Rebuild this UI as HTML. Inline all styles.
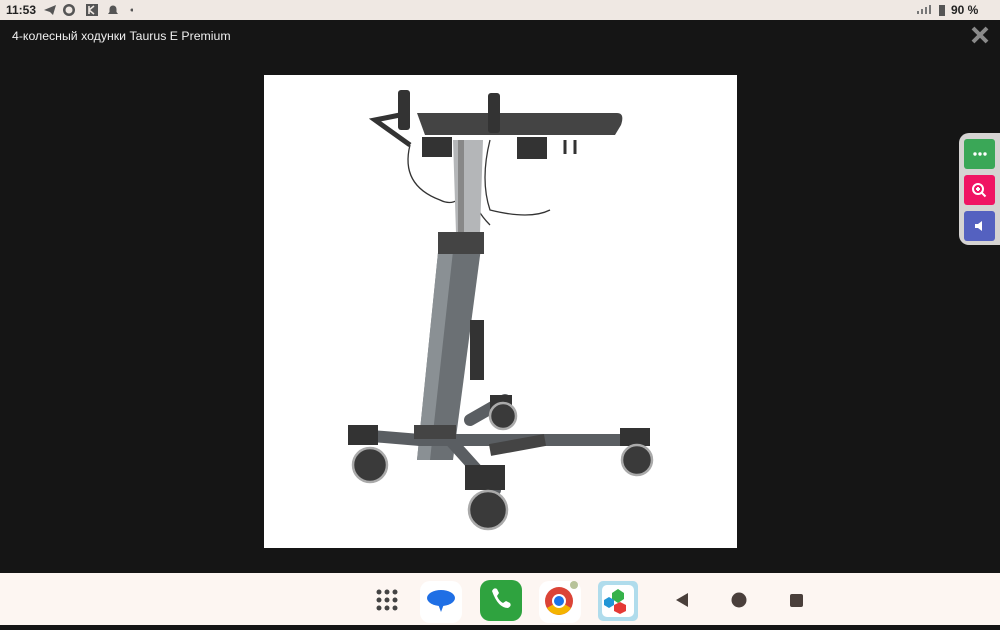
<!DOCTYPE html>
<html><head><meta charset="utf-8"><style>
body{margin:0;width:1000px;height:625px;overflow:hidden;background:#151515;font-family:"Liberation Sans",sans-serif;position:relative}
.sb{position:absolute;left:0;top:0;width:1000px;height:20px;background:#efe8e3;font-size:12px;font-weight:bold;color:#222}
.nav{position:absolute;left:0;top:573px;width:1000px;height:52px;background:#fdf6f2}
.title{position:absolute;left:12px;top:29px;color:#f0f0f0;font-size:12.3px}
.img{position:absolute;left:264px;top:75px;width:473px;height:473px;background:#fff}
.panel{position:absolute;left:959px;top:133px;width:45px;height:112px;background:#d5d3d2;border-radius:10px 0 0 10px}
.btn{position:absolute;left:5px;width:31px;height:30px;border-radius:3px}
</style></head><body>
<div class="sb">
<span style="position:absolute;left:6px;top:3px">11:53</span>
<svg style="position:absolute;left:43px;top:3px" width="90" height="14"><path d="M1 7L13 2 10 12 7 9z" fill="#555"/><circle cx="26" cy="7" r="6" fill="#555"/><circle cx="26" cy="7" r="3.5" fill="#efe8e3"/><rect x="43" y="1" width="12" height="12" fill="#555"/><path d="M46 3v8M46 7l5-4M46 7l5 4" stroke="#efe8e3" stroke-width="1.6"/><path d="M65 11h10l-1.5-2V6a3.5 3.5 0 0 0-7 0v3z" fill="#555"/><circle cx="89" cy="7" r="1.5" fill="#555"/></svg>
<svg style="position:absolute;left:915px;top:4px" width="30" height="12"><path d="M2 10h2V7H2zM6 10h2V5H6zM10 10h2V3h-2zM14 10h2V1h-2z" fill="#777"/><rect x="24" y="1" width="6" height="11" fill="#555"/></svg>
<span style="position:absolute;left:951px;top:3px">90 %</span>
</div>
<div class="title">4-колесный ходунки Taurus E Premium</div>
<svg style="position:absolute;left:971px;top:26px" width="18" height="18"><path d="M2 2L16 16M16 2L2 16" stroke="#8a8a8a" stroke-width="4"/></svg>
<div class="img">
<svg width="473" height="473" viewBox="264 75 473 473">
<g fill="none" stroke="#333" stroke-width="1.3"><path d="M410 145q-10 40 30 55 20 10 30 -20"/><path d="M490 140q-10 40 0 70q40 10 60 0"/><path d="M470 145q-10 50 20 80"/></g>
<path d="M453 140h30l-3 93h-24z" fill="#b4b6b8"/><path d="M458 140h6v93h-6z" fill="#888"/>
<path d="M440 233h43l-30 227h-36z" fill="#6b7074"/><path d="M440 233h15l-25 227h-13z" fill="#8a9094"/>
<rect x="438" y="232" width="46" height="22" fill="#444"/>
<rect x="470" y="320" width="14" height="60" fill="#333"/>
<g stroke="#5a5e62" stroke-width="12" stroke-linecap="round"><path d="M420 440L635 440"/><path d="M420 440L360 435"/><path d="M450 440L495 490"/><path d="M470 420L505 400"/></g>
<path d="M490 450L545 440" stroke="#444" stroke-width="12"/>
<rect x="414" y="425" width="42" height="14" fill="#444"/>
<path d="M417 113h200q8 0 4 12l-6 10h-190z" fill="#444"/>
<path d="M400 115l-25 5 35 25" fill="none" stroke="#333" stroke-width="5"/>
<rect x="398" y="90" width="12" height="40" rx="3" fill="#333"/><rect x="488" y="93" width="12" height="40" rx="3" fill="#333"/>
<rect x="422" y="137" width="30" height="20" fill="#333"/><rect x="517" y="137" width="30" height="22" fill="#333"/>
<path d="M565 140v14M575 140v14" stroke="#333" stroke-width="3"/>
<g fill="#333"><rect x="348" y="425" width="30" height="20"/><rect x="620" y="428" width="30" height="18"/><rect x="465" y="465" width="40" height="25"/><rect x="490" y="395" width="22" height="14"/></g>
<g fill="#3a3a3a" stroke="#aaa" stroke-width="2.5"><circle cx="370" cy="465" r="17"/><circle cx="488" cy="510" r="19"/><circle cx="637" cy="460" r="15"/><circle cx="503" cy="416" r="13"/></g>
</svg></div>
<div class="panel">
<div class="btn" style="top:6px;background:#3aa757"><svg width="31" height="30"><g fill="#fff"><circle cx="11" cy="15" r="1.7"/><circle cx="16" cy="15" r="1.7"/><circle cx="21" cy="15" r="1.7"/></g></svg></div>
<div class="btn" style="top:42px;background:#f01463"><svg width="31" height="30"><circle cx="14" cy="14" r="5" fill="none" stroke="#fff" stroke-width="2"/><path d="M17.5 17.5l4 4M12 14h4M14 12v4" stroke="#fff" stroke-width="2"/></svg></div>
<div class="btn" style="top:78px;background:#5461c0"><svg width="31" height="30"><path d="M11 13h3l4-3v10l-4-3h-3z" fill="#fff"/></svg></div>
</div>
<div class="nav">
<svg width="1000" height="52">
<g fill="#444"><circle cx="379" cy="19" r="2.5"/><circle cx="387" cy="19" r="2.5"/><circle cx="395" cy="19" r="2.5"/><circle cx="379" cy="27" r="2.5"/><circle cx="387" cy="27" r="2.5"/><circle cx="395" cy="27" r="2.5"/><circle cx="379" cy="35" r="2.5"/><circle cx="387" cy="35" r="2.5"/><circle cx="395" cy="35" r="2.5"/></g>
<rect x="420" y="8" width="42" height="42" rx="10" fill="#fff"/><ellipse cx="441" cy="25" rx="14" ry="8" fill="#1f6fe5"/><path d="M438 31l3 8 3-8z" fill="#1f6fe5"/>
<rect x="480" y="7" width="42" height="41" rx="10" fill="#2fa33f"/><path d="M492 18q2-4 5-2l2 4-2 3q2 5 6 7l3-2 4 2q2 3-2 5-10 0-16-17z" fill="#fff"/>
<rect x="539" y="8" width="42" height="42" rx="10" fill="#fff"/><circle cx="559" cy="28" r="14" fill="#db4437"/><path d="M559 28L571 35A14 14 0 0 1 547 35z" fill="#f4b400"/><circle cx="559" cy="28" r="7" fill="#fff"/><circle cx="559" cy="28" r="5" fill="#1a73e8"/><circle cx="574" cy="12" r="4" fill="#b8c39a"/>
<rect x="598" y="8" width="40" height="40" rx="5" fill="#b0dcec"/><rect x="602" y="12" width="32" height="32" rx="5" fill="#fff"/><path d="M612 20l6-4 6 4v6l-6 4-6-4z" fill="#36b24a"/><path d="M604 27l5-3 5 3v5l-5 3-5-3z" fill="#2196d6"/><path d="M614 32l6-3 6 3v6l-6 3-6-3z" fill="#e53935"/>
<path d="M688 20v14l-12-7z" fill="#4a3f3b"/><circle cx="739" cy="27" r="7.5" fill="#4a3f3b"/><rect x="790" y="21" width="13" height="13" rx="2" fill="#4a3f3b"/>
</svg></div>
</body></html>
